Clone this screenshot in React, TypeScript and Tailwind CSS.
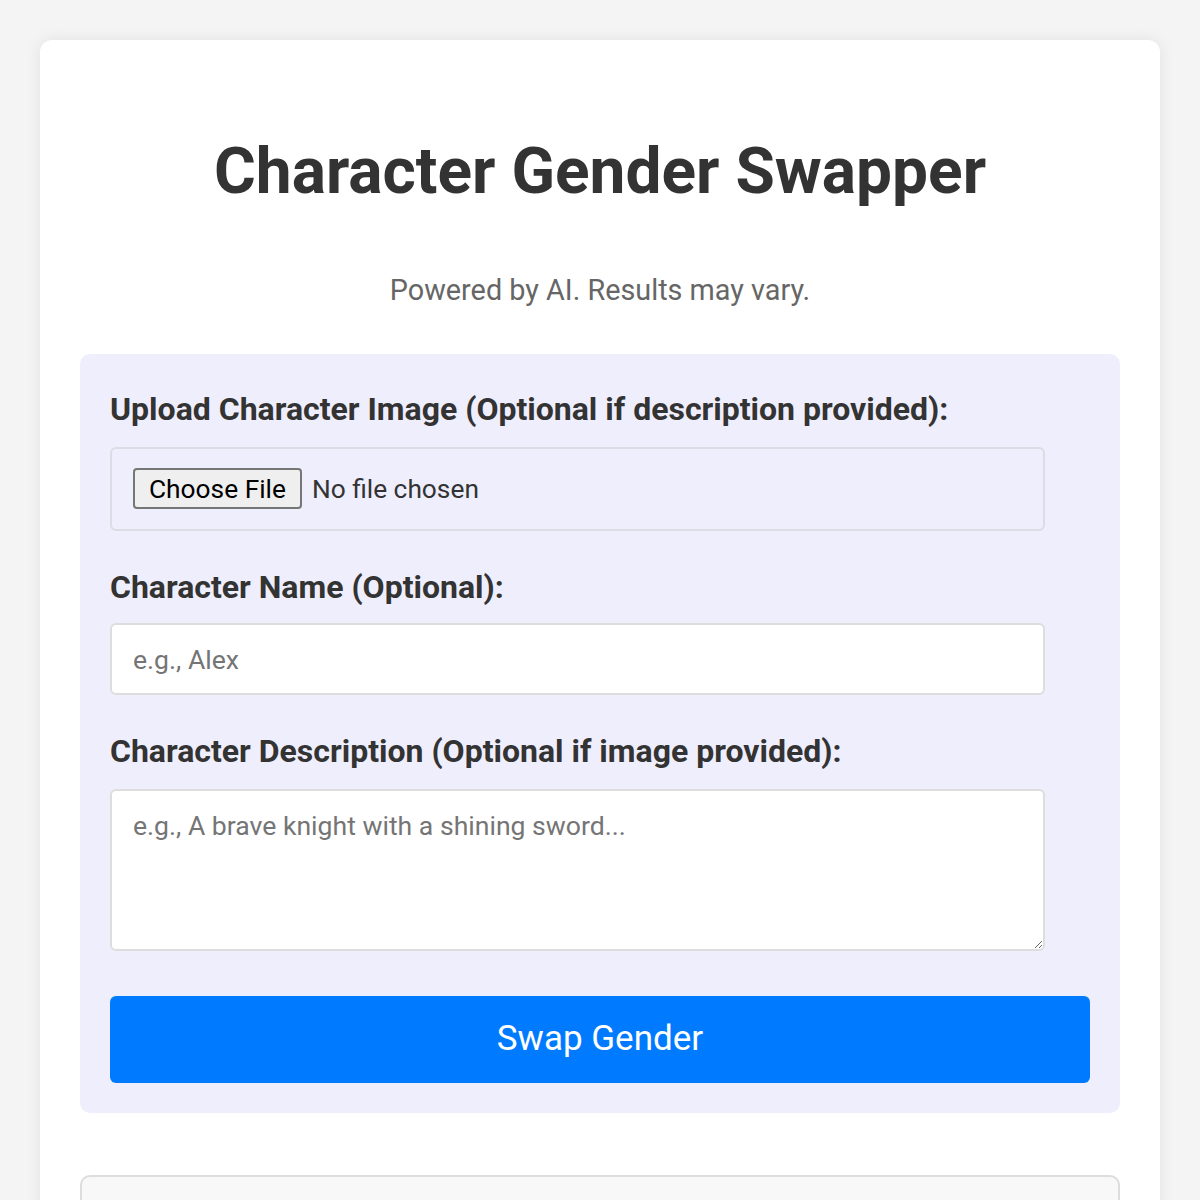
import React from 'react';

const App: React.FC = () => {
  return (
    <div className="min-h-[1200px] bg-[#f4f4f4] px-10 pt-10 font-['Roboto','Liberation_Sans',sans-serif]">
      <div className="rounded-xl bg-white px-10 pb-10 pt-[96px] shadow-[0_0_16px_rgba(0,0,0,0.08)]">
        <h1 className="text-center text-[64px] font-bold leading-[72px] text-[#333]">Character Gender Swapper</h1>
        <p className="mt-[64px] text-center text-[28.8px] leading-[36px] text-[#666]">Powered by AI. Results may vary.</p>

        <div className="mt-[46px] rounded-[10px] bg-[#efeefd] px-[30px] pb-[30px] pt-[35px]">
          <label className="block text-[32px] font-bold leading-[40px] text-[#333]">
            Upload Character Image (Optional if description provided):
          </label>
          <div className="mt-[18px] flex h-[84px] w-[935px] items-center rounded-md border-2 border-[#dcdce4] px-[21px]">
            <input
              type="file"
              className="text-[26.3px] text-[#333] font-['Roboto',sans-serif] file:mr-[10px] file:h-[41px] file:rounded-[4px] file:border-2 file:border-solid file:border-[#767676] file:bg-[#efefef] file:px-[14px] file:text-[26.3px] file:text-black"
            />
          </div>

          <label className="mt-[36px] block text-[32px] font-bold leading-[40px] text-[#333]">
            Character Name (Optional):
          </label>
          <input
            type="text"
            placeholder="e.g., Alex"
            className="mt-[16px] block h-[72px] w-[935px] rounded-md border-2 border-[#ddd] bg-white px-[21px] text-[26.6px] text-[#333] placeholder:text-[#757575] outline-none"
          />

          <label className="mt-[36px] block text-[32px] font-bold leading-[40px] text-[#333]">
            Character Description (Optional if image provided):
          </label>
          <textarea
            placeholder="e.g., A brave knight with a shining sword..."
            className="mt-[18px] block h-[162px] w-[935px] rounded-md border-2 border-[#ddd] bg-white px-[21px] py-[17px] text-[26.6px] leading-[36px] text-[#333] placeholder:text-[#757575] outline-none"
          />

          <button className="mt-[45px] block h-[87px] w-full rounded-md bg-[#007bff] text-[35px] text-white">
            Swap Gender
          </button>
        </div>

        <div className="mt-[62px] h-[120px] rounded-[10px] border-2 border-[#ddd] bg-[#f8f8f8]" />
      </div>
    </div>
  );
};

export default App;
